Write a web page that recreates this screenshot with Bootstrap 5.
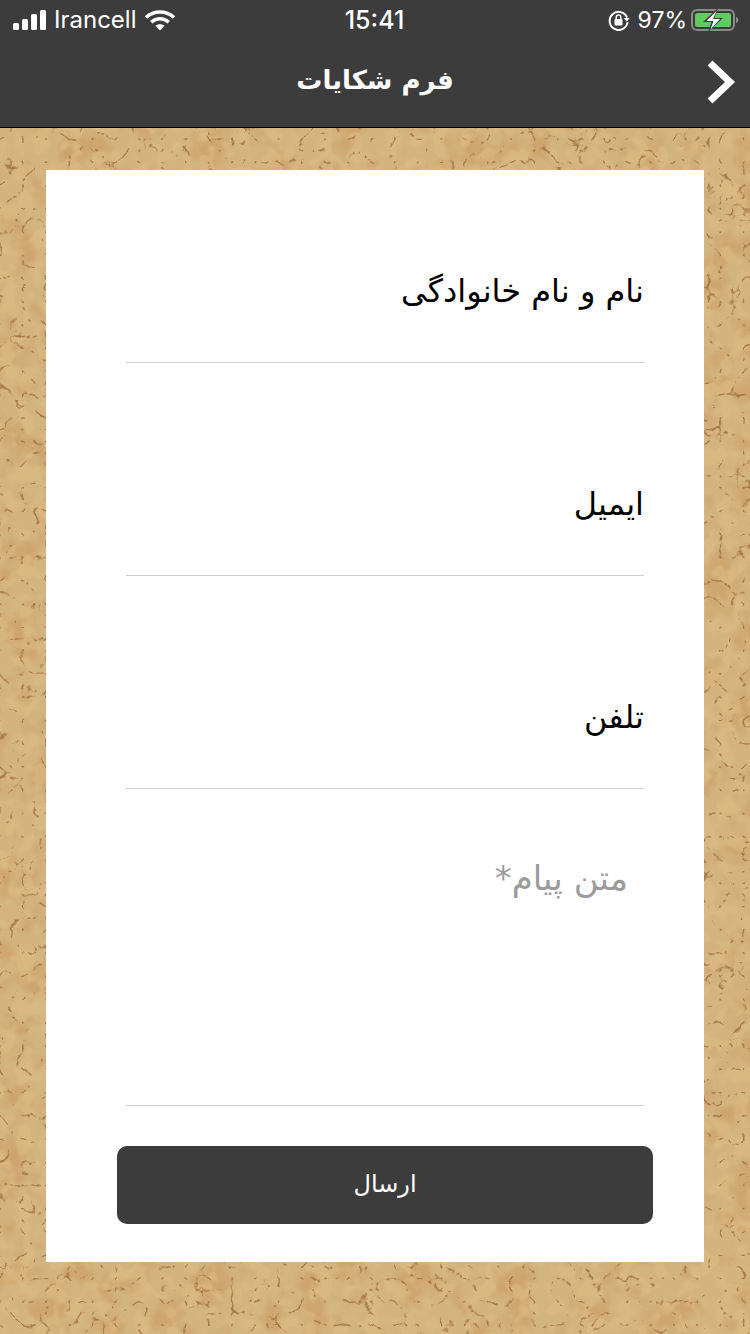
<!DOCTYPE html>
<html lang="fa">
<head>
    <meta charset="UTF-8">
    <meta name="viewport" content="width=device-width, initial-scale=1">
    <title>فرم شکایات</title>
    <link rel="stylesheet" href="https://cdn.jsdelivr.net/npm/bootstrap@5.3.0/dist/css/bootstrap.min.css">
    <style>
        body {
            width: 750px;
            height: 1334px;
            overflow: hidden;
            position: relative;
            background-color: #d3b47f;
            font-family: "DejaVu Sans", "Liberation Sans", sans-serif;
        }
        .cork-layer {
            position: absolute;
            top: 0;
            left: 0;
            z-index: 0;
        }
        .top-area {
            position: relative;
            z-index: 1;
            height: 128px;
            background-color: #3c3c3c;
            border-bottom: 1px solid #000;
            color: #fff;
        }
        .status-row {
            height: 40px;
            padding: 0 11px 0 13px;
            font-family: "Inter", "Liberation Sans", sans-serif;
            font-size: 23px;
            line-height: 40px;
            font-weight: 400;
        }
        .status-left {
            width: 297px;
        }
        .status-right {
            width: 300px;
        }
        .status-carrier {
            margin-left: 7px;
            font-size: 24px;
        }
        .status-time {
            font-size: 25px;
            font-weight: 500;
        }
        .title-row {
            height: 87px;
            padding-bottom: 8px;
        }
        .page-title {
            font-size: 26px;
            font-weight: 700;
            margin: 0;
            line-height: 1;
        }
        .back-chevron {
            position: absolute;
            top: 60px;
            left: 707px;
        }
        .form-sheet {
            position: relative;
            z-index: 1;
            width: 658px;
            height: 1092px;
            margin: 42px 0 0 46px;
            background-color: #fff;
            padding: 0 60px 0 80px;
        }
        .field-line {
            height: 213px;
            border-bottom: 1px solid #cfcfcf;
            padding-bottom: 55px;
            color: #000;
            font-size: 32px;
            line-height: 1;
        }
        .field-first {
            height: 193px;
        }
        .message-line {
            height: 317px;
            border-bottom: 1px solid #cfcfcf;
            color: #9b9b9b;
            font-size: 34px;
            line-height: 1;
            padding: 72px 16px 0 0;
        }
        .btn-send {
            display: block;
            width: 536px;
            height: 78px;
            margin: 40px -9px 0 0;
            padding-bottom: 8px;
            background-color: #3c3c3c;
            border: 0;
            border-radius: 10px;
            color: #fff;
            font-size: 24px;
        }
    </style>
</head>
<body>
    <!-- cork background -->
    <svg class="cork-layer" width="750" height="1334">
        <defs>
            <filter id="corkBlotch" x="0" y="0" width="100%" height="100%" color-interpolation-filters="sRGB">
                <feTurbulence type="fractalNoise" baseFrequency="0.03" numOctaves="3" seed="4" stitchTiles="noStitch"/>
                <feColorMatrix type="matrix" values="0 0 0 0 0.79  0 0 0 0 0.6  0 0 0 0 0.38  4 0 0 0 -1.9"/>
            </filter>
            <filter id="corkGrain" x="0" y="0" width="100%" height="100%" color-interpolation-filters="sRGB">
                <feTurbulence type="fractalNoise" baseFrequency="0.06" numOctaves="2" seed="17"/>
                <feColorMatrix type="matrix" values="0 0 0 0 0.87  0 0 0 0 0.74  0 0 0 0 0.52  6 0 0 0 -2.9"/>
            </filter>
            <filter id="corkCracks" x="0" y="0" width="100%" height="100%" color-interpolation-filters="sRGB">
                <feTurbulence type="turbulence" baseFrequency="0.043" numOctaves="3" seed="11"/>
                <feColorMatrix type="matrix" values="0 0 0 0 0.62  0 0 0 0 0.43  0 0 0 0 0.25  -13 0 0 0 1.5"/>
                <feGaussianBlur stdDeviation="0.5"/>
            </filter>
        </defs>
        <rect width="750" height="1334" fill="#d3b47f"/>
        <rect width="750" height="1334" filter="url(#corkBlotch)" opacity="0.55"/>
        <rect width="750" height="1334" filter="url(#corkGrain)" opacity="0.6"/>
        <rect width="750" height="1334" filter="url(#corkCracks)" opacity="0.8"/>
    </svg>

    <header class="top-area">
        <div class="status-row d-flex justify-content-between align-items-center">
            <div class="status-left d-flex align-items-center">
                <svg width="34" height="22" viewBox="0 0 34 22" fill="#fff">
                    <rect x="0" y="14" width="6" height="7" rx="1.5"/>
                    <rect x="9" y="10" width="6" height="11" rx="1.5"/>
                    <rect x="18" y="5" width="6" height="16" rx="1.5"/>
                    <rect x="27" y="1" width="6" height="20" rx="1.5"/>
                </svg>
                <span class="status-carrier">Irancell</span>
                <svg class="ms-2" width="32" height="22" viewBox="0 0 32 22" fill="none" stroke="#fff" stroke-width="3.6">
                    <path d="M2 8.5C10 1.2 22 1.2 30 8.5"/>
                    <path d="M7.2 13.2C12.5 8.6 19.5 8.6 24.8 13.2"/>
                    <path d="M16 21.500l-4.600-4.800c2.700-2 6.500-2 9.200 0z" fill="#fff" stroke="none"/>
                </svg>
            </div>
            <span class="status-time">15:41</span>
            <div class="status-right d-flex align-items-center justify-content-end">
                <svg width="22" height="22" viewBox="0 0 22 22" fill="none">
                    <path d="M19 8.500A9 9 0 1 0 19.600 13" stroke="#fff" stroke-width="2"/>
                    <path d="M15.800 9h6l-3 3.600z" fill="#fff"/>
                    <rect x="6.500" y="10" width="8" height="6.500" rx="1" fill="#fff"/>
                    <path d="M8.200 10V8.200a2.300 2.300 0 0 1 4.600 0V10" stroke="#fff" stroke-width="1.500"/>
                </svg>
                <span class="ms-2">97%</span>
                <svg class="ms-1" width="48" height="24" viewBox="0 0 48 24">
                    <rect x="1" y="2" width="42" height="20" rx="5" fill="none" stroke="#8a8a8a" stroke-width="2"/>
                    <rect x="4" y="5" width="36" height="14" rx="2.500" fill="#5fcb61"/>
                    <path d="M45 9c1.600.4 2.400 1.600 2.400 3s-.8 2.600-2.400 3z" fill="#8a8a8a"/>
                    <path d="M27 0L12 14h8.500l-3.500 10L32 10h-8.500z" fill="#3c3c3c"/>
                    <path d="M25.500 3L15.500 13h7l-3 8.500L29 11h-7z" fill="#fff"/>
                </svg>
            </div>
        </div>
        <div class="title-row d-flex justify-content-center align-items-center">
            <h1 class="page-title" dir="rtl">فرم شکایات</h1>
        </div>
        <svg class="back-chevron" width="28" height="44" viewBox="0 0 28 44" fill="none" stroke="#fff" stroke-width="7">
            <path d="M3 3l20 19-20 19"/>
        </svg>
    </header>

    <main class="form-sheet" dir="rtl">
        <div class="field-line field-first d-flex align-items-end">نام و نام خانوادگی</div>
        <div class="field-line d-flex align-items-end">ایمیل</div>
        <div class="field-line d-flex align-items-end">تلفن</div>
        <div class="message-line">متن پیام*</div>
        <button type="button" class="btn btn-send">ارسال</button>
    </main>

    <script src="https://cdn.jsdelivr.net/npm/bootstrap@5.3.0/dist/js/bootstrap.bundle.min.js"></script>
</body>
</html>
